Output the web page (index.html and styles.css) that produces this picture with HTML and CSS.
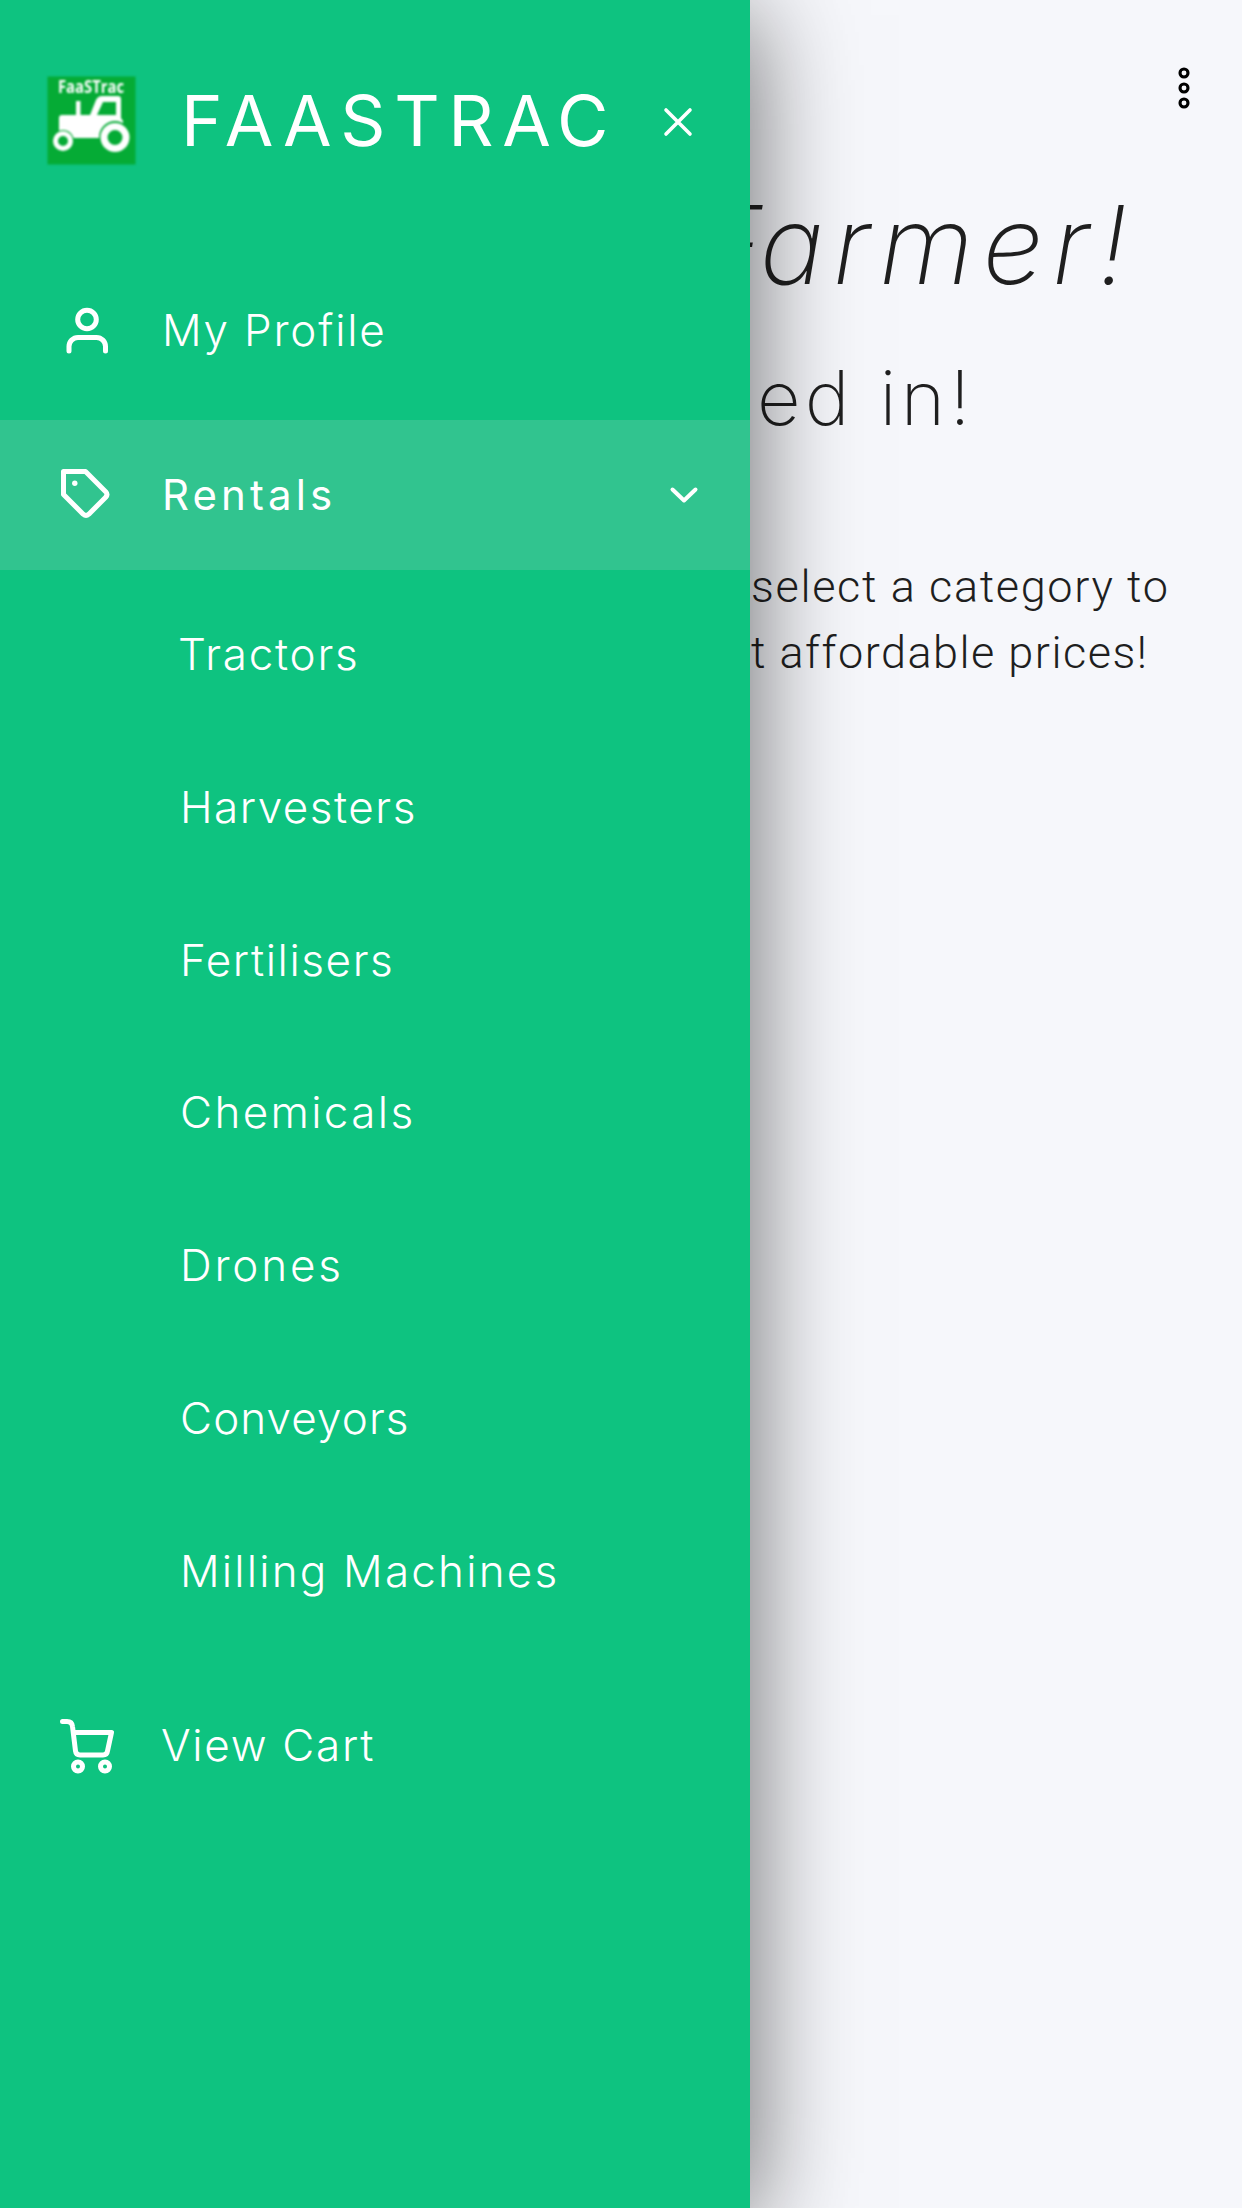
FILE: index.html
```
<!DOCTYPE html>
<html lang="en">
<head>
<meta charset="utf-8">
<title>Faastrac</title>
<link rel="stylesheet" href="styles.css">
</head>
<body>
<div class="app">
  <nav class="drawer">
    <header class="brand">
      <svg class="logo" viewBox="0 0 90 90">
        <rect x="1.5" y="1.5" width="88" height="88" fill="#05ab35"/>
        <text class="logo-text" x="12" y="18" textLength="66" lengthAdjust="spacingAndGlyphs">FaaSTrac</text>
        <g fill="#fff">
          <path d="M13 43q0-3 3-3H30V26h4.500V40H44L50 25q2-4 6-4H72q3 0 3 3V43l2 3V63H26Q24 54 13 56ZM51 40H70V27H57Z" fill-rule="evenodd"/>
          <path d="M30 56H58V62H30Z"/>
          <circle cx="17" cy="66" r="11" fill="#05ab35"/>
          <circle cx="69" cy="62" r="16" fill="#05ab35"/>
          <circle cx="17" cy="66" r="7.500" fill="none" stroke="#fff" stroke-width="5"/>
          <circle cx="69" cy="62.500" r="11" fill="none" stroke="#fff" stroke-width="7"/>
        </g>
      </svg>
      <span class="brand-name">FAASTRAC</span>
      <svg class="close" viewBox="0 0 30 30"><path d="M3 3 27 27M27 3 3 27"/></svg>
    </header>
    <ul class="menu">
      <li class="item">
        <svg class="icon" viewBox="0 0 60 60"><circle cx="29" cy="18.500" r="9.300"/><path d="M11 50V45.500a9 9 0 0 1 9-9h18.500a9 9 0 0 1 9 9v4.500"/></svg>
        <span class="label profile">My Profile</span>
      </li>
      <li class="item active">
        <svg class="icon" viewBox="0 0 60 60"><path d="M5.500 6.500H27.500L47.700 26.700q2.500 2.800 0 5.600L30.800 49.200q-2.800 2.500-5.600 0L5.500 29.500Z"/><circle class="dot" cx="16.800" cy="18.300" r="2.700"/></svg>
        <span class="label rentals">Rentals</span>
        <svg class="chevron" viewBox="0 0 30 18"><path d="M3.500 3.500 15 14.500 26.500 3.500"/></svg>
      </li>
    </ul>
    <ul class="submenu">
      <li class="tractors">Tractors</li>
      <li class="harvesters">Harvesters</li>
      <li class="fertilisers">Fertilisers</li>
      <li class="chemicals">Chemicals</li>
      <li class="drones">Drones</li>
      <li class="conveyors">Conveyors</li>
      <li class="milling">Milling Machines</li>
    </ul>
    <div class="item cart">
      <svg class="icon" viewBox="0 0 60 60"><path d="M4.500 5.500H9q5 0 5.500 5L17.500 35q.5 4 4.500 4H45q4 0 4.500-4L53.500 16.500H15.500"/><circle cx="20" cy="50.500" r="4.500"/><circle cx="47" cy="50.500" r="4.500"/></svg>
      <span class="label view-cart">View Cart</span>
    </div>
  </nav>
  <main class="page">
    <svg class="more" viewBox="0 0 14 44"><circle cx="7" cy="7" r="4"/><circle cx="7" cy="22" r="4"/><circle cx="7" cy="37" r="4"/></svg>
    <h1 class="greeting"><span class="initial">F</span>armer!</h1>
    <h2 class="status">ed in!</h2>
    <p class="hint"><span class="line-a">select a category to</span><span class="line-b">t affordable prices!</span></p>
  </main>
</div>
</body>
</html>
```
FILE: styles.css
```
* { box-sizing: border-box; }
body { margin: 0; background: #f6f7fb; font-family: Inter, "Open Sans", sans-serif; }
ul { list-style: none; margin: 0; padding: 0; }
svg { display: block; flex: none; fill: none; stroke: #fff; stroke-linecap: round; stroke-linejoin: round; }

.app { display: flex; width: 1242px; height: 2208px; overflow: hidden; }

.drawer {
  position: relative;
  z-index: 1;
  flex: none;
  width: 750px;
  height: 2208px;
  background: #0ec380;
  color: #fff;
  box-shadow: 0 15px 100px rgba(0, 0, 0, .6);
}

.brand { display: flex; align-items: center; height: 256px; padding: 0 0 16px 46px; }
.logo { width: 90px; height: 90px; stroke: none; filter: blur(.8px); }
.logo-text { font: 700 17px "Open Sans", sans-serif; fill: #fff; }
.brand-name { width: 474px; margin-left: 45px; font-size: 70.500px; font-weight: 400; letter-spacing: 8.600px; white-space: nowrap; }
.close { width: 30px; height: 30px; margin: 4px 0 0 8px; stroke-width: 3.6; }

.item { display: flex; align-items: center; height: 150px; padding-left: 58px; }
.menu { display: grid; gap: 14px; }
.active { background: #31c48f; }
.icon { width: 60px; height: 60px; stroke-width: 5; }
.dot { fill: #fff; stroke: none; }
.label { margin-left: 44px; padding-bottom: 2px; font-size: 44px; font-weight: 280; white-space: nowrap; }
.profile { letter-spacing: 1.800px; }
.view-cart { margin-left: 43px; letter-spacing: 1.700px; }
.rentals { font-size: 42px; font-weight: 400; letter-spacing: 4.100px; }
.chevron { width: 30px; height: 18px; margin: 0 51px 0 auto; stroke-width: 4; }

.submenu { padding: 8px 0 23px 180px; font-size: 44px; font-weight: 280; }
.submenu li { height: 152.800px; line-height: 152.800px; white-space: nowrap; }
.submenu .tractors { margin-left: -2px; letter-spacing: 1.750px; }
.harvesters { letter-spacing: 1.500px; }
.fertilisers { letter-spacing: 1.600px; }
.chemicals { letter-spacing: 2.350px; }
.drones { letter-spacing: 2.800px; }
.conveyors { letter-spacing: 1.100px; }
.milling { letter-spacing: 2.200px; }

.page { position: relative; flex: 1; color: #1f1f1f; }
.more { width: 14px; height: 44px; margin: 66px 51px 0 auto; stroke: #000; stroke-width: 3.1; }
.greeting { margin: 69px 0 0 -51px; font-size: 108.700px; font-style: italic; font-weight: 220; line-height: 132px; letter-spacing: 8.700px; white-space: nowrap; }
.initial { letter-spacing: -3px; }
.status { margin: 31px 0 0 7px; font-size: 75.700px; font-weight: 220; line-height: 112px; letter-spacing: 4.300px; white-space: nowrap; }
.hint { display: grid; margin: 100px 0 0 1px; font-family: Roboto, "Open Sans", sans-serif; font-size: 45px; font-weight: 300; line-height: 66px; white-space: nowrap; }
.line-a { letter-spacing: 1.650px; }
.line-b { letter-spacing: 1.500px; }
```
